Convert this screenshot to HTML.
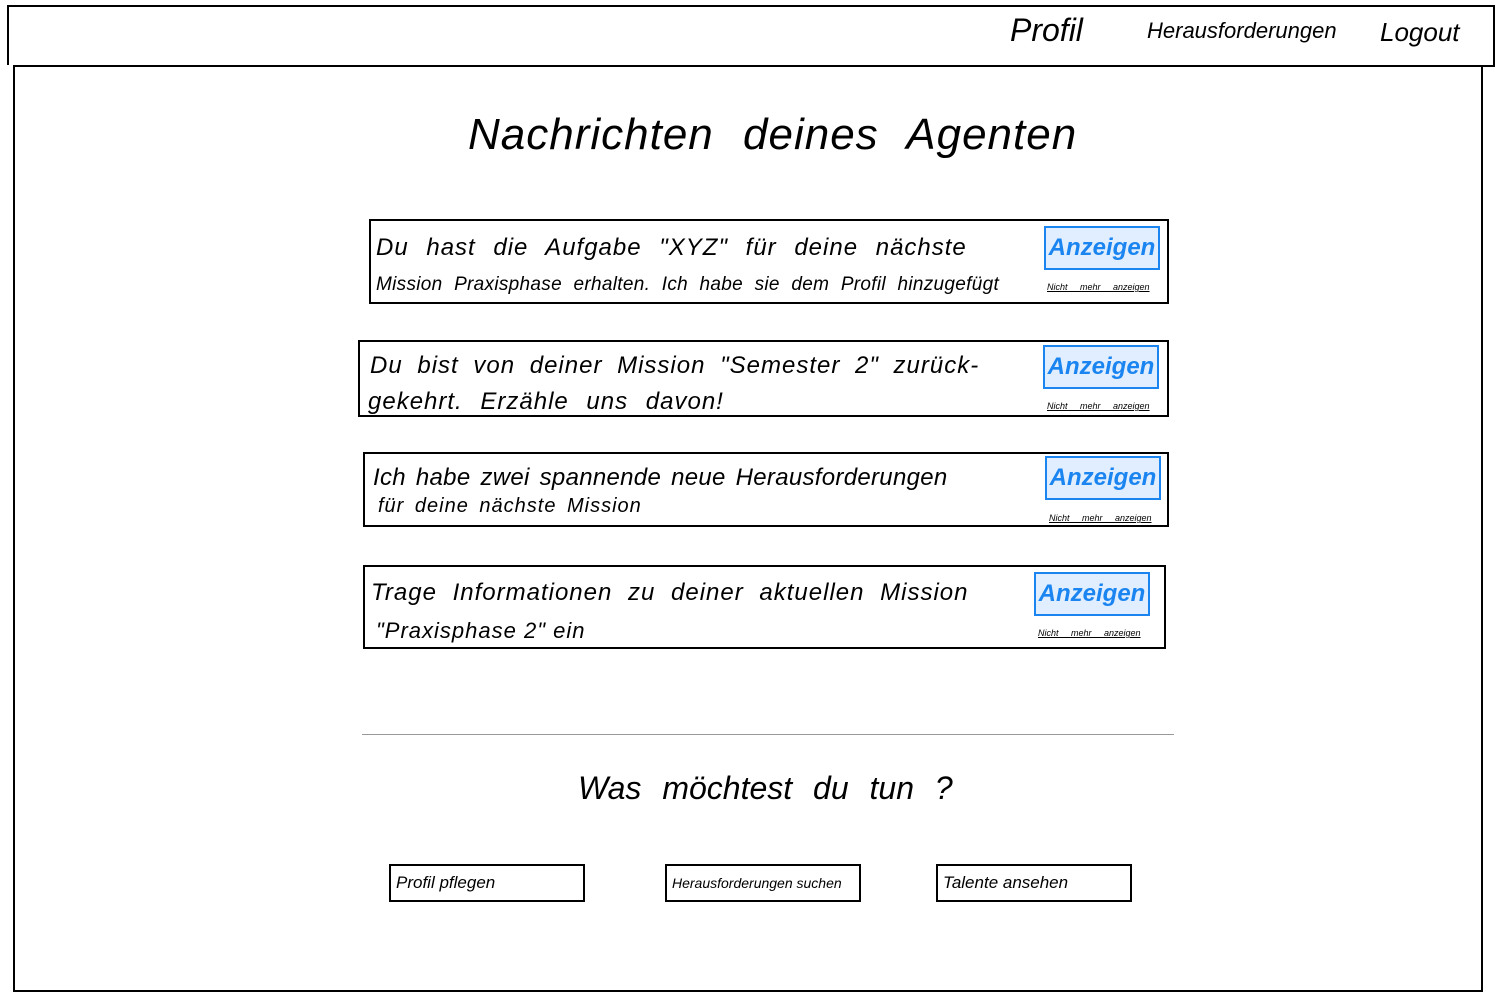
<!DOCTYPE html>
<html><head><meta charset="utf-8"><style>
body{margin:0;width:1511px;height:1000px;background:#fff;position:relative;overflow:hidden;font-family:"Liberation Sans",sans-serif;font-style:italic;color:#000}
.a{position:absolute;white-space:nowrap}
.l{position:absolute;background:#000}
.card{position:absolute;border:2px solid #000;box-sizing:border-box}
.t{position:absolute;font-size:24px;white-space:nowrap;letter-spacing:1px}
.btn{position:absolute;width:116px;height:44px;border:2px solid #1a84f0;background:#e0eeff;box-sizing:border-box;color:#1a84f0;font-size:24px;text-align:center;line-height:40px;font-weight:bold}
.sm{position:absolute;font-size:9px;text-decoration:underline;white-space:nowrap;word-spacing:10px}
.ob{position:absolute;width:196px;height:38px;border:2px solid #000;box-sizing:border-box;font-size:17px;line-height:34px;padding-left:5px;white-space:nowrap}
</style></head><body>
<div class="l" style="left:7px;top:5px;width:1488px;height:2px"></div>
<div class="l" style="left:13px;top:65px;width:1482px;height:2px"></div>
<div class="l" style="left:7px;top:5px;width:2px;height:60px"></div>
<div class="l" style="left:13px;top:65px;width:2px;height:927px"></div>
<div class="l" style="left:1493px;top:5px;width:2px;height:62px"></div>
<div class="l" style="left:1481px;top:65px;width:2px;height:927px"></div>
<div class="l" style="left:13px;top:990px;width:1470px;height:2px"></div>
<div class="a" style="left:1010px;top:12px;font-size:32px">Profil</div>
<div class="a" style="left:1147px;top:18px;font-size:22px">Herausforderungen</div>
<div class="a" style="left:1380px;top:17px;font-size:26px">Logout</div>
<div class="a" style="left:468px;top:110px;font-size:44px;letter-spacing:1px;word-spacing:16px">Nachrichten deines Agenten</div>

<div class="card" style="left:369px;top:219px;width:800px;height:85px"></div>
<div class="t" style="left:376px;top:234px;word-spacing:10px">Du hast die Aufgabe "XYZ" für deine nächste</div>
<div class="t" style="left:376px;top:274px;font-size:19px;letter-spacing:0.3px;word-spacing:6px">Mission Praxisphase erhalten. Ich habe sie dem Profil hinzugefügt</div>
<div class="btn" style="left:1044px;top:226px">Anzeigen</div>
<div class="sm" style="left:1047px;top:282px">Nicht mehr anzeigen</div>

<div class="card" style="left:358px;top:340px;width:811px;height:77px"></div>
<div class="t" style="left:370px;top:352px;word-spacing:7px">Du bist von deiner Mission "Semester 2" zurück-</div>
<div class="t" style="left:368px;top:388px;word-spacing:10px">gekehrt. Erzähle uns davon!</div>
<div class="btn" style="left:1043px;top:345px">Anzeigen</div>
<div class="sm" style="left:1047px;top:401px">Nicht mehr anzeigen</div>

<div class="card" style="left:363px;top:452px;width:806px;height:75px"></div>
<div class="t" style="left:373px;top:464px;letter-spacing:0.3px;word-spacing:3px">Ich habe zwei spannende neue Herausforderungen</div>
<div class="t" style="left:378px;top:495px;font-size:20px;word-spacing:4px">für deine nächste Mission</div>
<div class="btn" style="left:1045px;top:456px">Anzeigen</div>
<div class="sm" style="left:1049px;top:513px">Nicht mehr anzeigen</div>

<div class="card" style="left:363px;top:565px;width:803px;height:84px"></div>
<div class="t" style="left:371px;top:579px;word-spacing:8px">Trage Informationen zu deiner aktuellen Mission</div>
<div class="t" style="left:376px;top:618px;font-size:22px">"Praxisphase 2" ein</div>
<div class="btn" style="left:1034px;top:572px">Anzeigen</div>
<div class="sm" style="left:1038px;top:628px">Nicht mehr anzeigen</div>

<div class="a" style="left:362px;top:734px;width:812px;height:1px;background:#999"></div>
<div class="a" style="left:578px;top:770px;font-size:32px;word-spacing:12px">Was möchtest du tun ?</div>
<div class="ob" style="left:389px;top:864px">Profil pflegen</div>
<div class="ob" style="left:665px;top:864px;font-size:14px">Herausforderungen suchen</div>
<div class="ob" style="left:936px;top:864px">Talente ansehen</div>
</body></html>
